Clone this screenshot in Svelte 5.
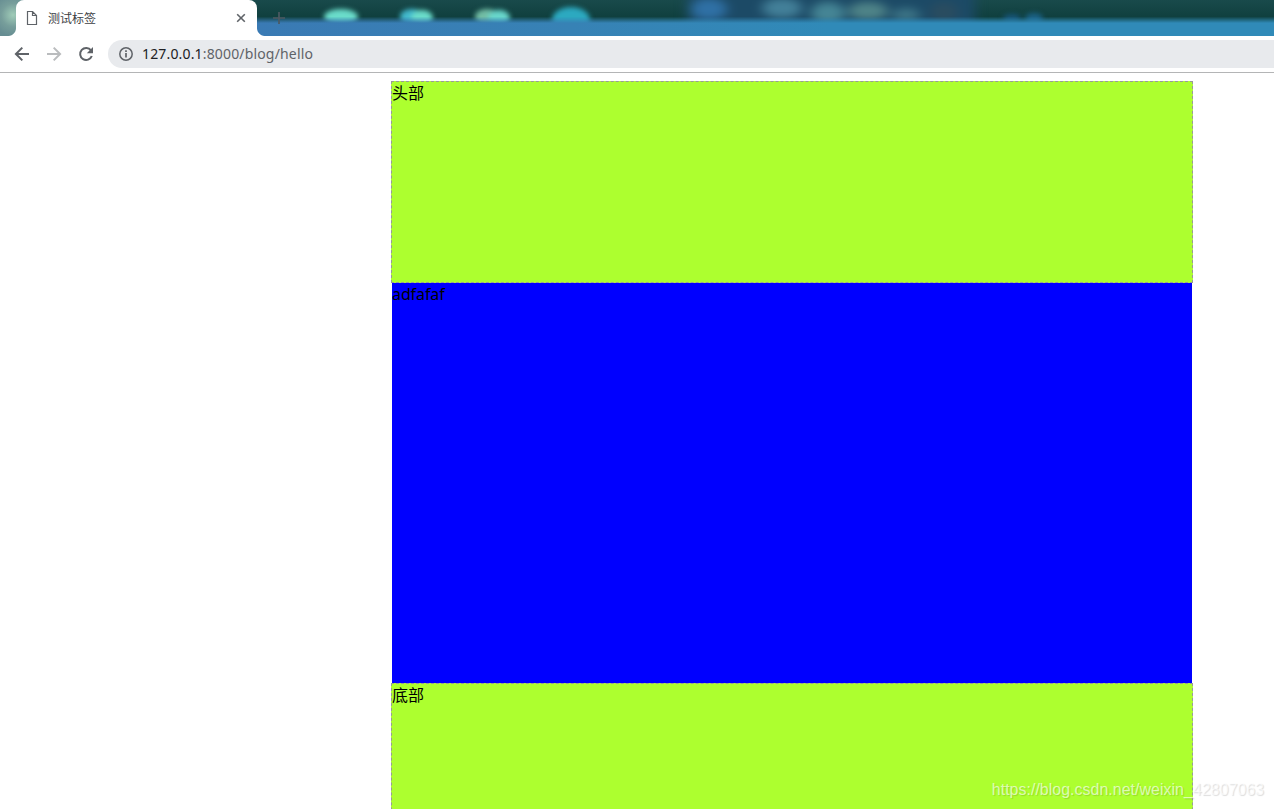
<script lang="ts">
	const host = '127.0.0.1';
	const path = ':8000/blog/hello';

	const sections = [
		{ id: 'header', text: '头部' },
		{ id: 'content', text: 'adfafaf' },
		{ id: 'footer', text: '底部' },
	];

	// blurred desktop shapes that shine through the window frame
	const icons = [
		{ cx: 341, cy: 17, rx: 17, ry: 8, fill: '#6adcca' },
		{ cx: 412, cy: 17, rx: 12, ry: 8, fill: '#42b8cc' },
		{ cx: 422, cy: 18, rx: 11, ry: 8, fill: '#6adcca' },
		{ cx: 487, cy: 17, rx: 12, ry: 8, fill: '#72bda5' },
		{ cx: 499, cy: 18, rx: 11, ry: 8, fill: '#68d6cb' },
		{ cx: 571, cy: 20, rx: 19, ry: 13, fill: '#2ca9c0' },
		{ cx: 1012, cy: 18, rx: 9, ry: 4, fill: '#175578' },
		{ cx: 1034, cy: 18, rx: 9, ry: 5, fill: '#1b6185' },
	];

	const clouds = [
		{ cx: 709, cy: 9, rx: 18, ry: 11, fill: '#2f70a5' },
		{ cx: 782, cy: 8, rx: 20, ry: 10, fill: '#438099' },
		{ cx: 828, cy: 13, rx: 17, ry: 11, fill: '#458595' },
		{ cx: 868, cy: 11, rx: 20, ry: 9, fill: '#4f8488' },
		{ cx: 906, cy: 15, rx: 14, ry: 7, fill: '#3c7486' },
		{ cx: 944, cy: 12, rx: 14, ry: 10, fill: '#2a4c60' },
	];
</script>

<div class="window">
	<div class="tab-strip">
		<svg class="backdrop" width="1274" height="36" viewBox="0 0 1274 36">
			<defs>
				<linearGradient id="dark" x2="0" y2="1">
					<stop offset="0" stop-color="#194a4b" />
					<stop offset="0.45" stop-color="#10403f" />
					<stop offset="1" stop-color="#10403f" />
				</linearGradient>
				<linearGradient id="blue" x2="1" y2="0">
					<stop offset="0.2" stop-color="#3a7ab4" />
					<stop offset="0.45" stop-color="#3782b5" />
					<stop offset="0.65" stop-color="#308ab8" />
					<stop offset="1" stop-color="#308ab8" />
				</linearGradient>
				<linearGradient id="edge" x2="0" y2="1">
					<stop offset="0.46" stop-color="#fff" stop-opacity="0" />
					<stop offset="0.64" stop-color="#fff" />
				</linearGradient>
				<radialGradient id="corner" gradientUnits="userSpaceOnUse" cx="13" cy="15" r="21">
					<stop offset="0" stop-color="#a0ccb8" />
					<stop offset="0.55" stop-color="#779e9b" />
					<stop offset="1" stop-color="#668d92" />
				</radialGradient>
				<mask id="fade">
					<rect width="1274" height="36" fill="url(#edge)" />
				</mask>
				<filter id="soft" filterUnits="userSpaceOnUse" x="0" y="-20" width="1274" height="76" color-interpolation-filters="sRGB">
					<feGaussianBlur stdDeviation="2.6" />
				</filter>
				<filter id="haze" filterUnits="userSpaceOnUse" x="600" y="-20" width="500" height="76" color-interpolation-filters="sRGB">
					<feGaussianBlur stdDeviation="6 4" />
				</filter>
			</defs>
			<rect width="1274" height="36" fill="url(#dark)" />
			<g filter="url(#haze)">
				<rect x="687" y="-10" width="288" height="50" fill="#1c4a66" />
				{#each clouds as cloud}
					<ellipse {...cloud} />
				{/each}
			</g>
			<g filter="url(#soft)">
				{#each icons as icon}
					<ellipse {...icon} />
				{/each}
			</g>
			<rect width="1274" height="36" fill="url(#blue)" mask="url(#fade)" />
			<rect width="30" height="36" fill="url(#corner)" />
		</svg>

		<div class="tab">
			<svg class="page-icon" width="12" height="14" viewBox="0 0 12 14">
				<path d="M1.5.5h5l4 4v9h-9zM6.5.5v4h4" fill="none" stroke="#5f6368" stroke-width="1.2" />
			</svg>
			<span class="tab-title">测试标签</span>
			<svg class="close" width="10" height="10" viewBox="0 0 10 10">
				<path d="M1.2 1.2l7.6 7.6M8.8 1.2L1.2 8.8" stroke="#5f6368" stroke-width="1.6" />
			</svg>
		</div>
		<svg class="new-tab" width="12" height="12" viewBox="0 0 12 12">
			<path d="M6 0v12M0 6h12" stroke="#4d5962" stroke-width="1.7" />
		</svg>
	</div>

	<div class="toolbar">
		<svg class="nav" width="16" height="16" viewBox="0 0 16 16">
			<path d="M15 8H2.4M8.3 1.6L1.9 8l6.4 6.4" fill="none" stroke="#5f6368" stroke-width="2" />
		</svg>
		<svg class="nav" width="16" height="16" viewBox="0 0 16 16">
			<path d="M1 8h12.6M7.7 1.6L14.1 8l-6.4 6.4" fill="none" stroke="#babcbe" stroke-width="2" />
		</svg>
		<svg class="nav" width="16" height="16" viewBox="0 0 16 16">
			<path d="M13 4.4A6 6 0 1 0 13.8 10" fill="none" stroke="#5f6368" stroke-width="2" />
			<path d="M15 1v6.2H8.8z" fill="#5f6368" />
		</svg>
		<div class="address">
			<svg width="14" height="14" viewBox="0 0 14 14">
				<circle cx="7" cy="7" r="6.2" fill="none" stroke="#5f6368" stroke-width="1.5" />
				<path d="M7 6v4.6M7 3.3v1.6" stroke="#5f6368" stroke-width="1.7" />
			</svg>
			<span class="url"><span class="host">{host}</span>{path}</span>
		</div>
	</div>

	<div class="page">
		{#each sections as section}
			<div class={section.id}>{section.text}</div>
		{/each}
	</div>

	<span class="watermark">https://blog.csdn.net/weixin_42807063</span>
</div>

<style>
	:global(body) {
		margin: 0;
		background: #fff;
	}

	.window {
		position: relative;
		width: 1274px;
		height: 809px;
		overflow: hidden;
		background: #fff;
	}

	.tab-strip {
		position: relative;
		display: flex;
		align-items: center;
		height: 36px;
		padding-left: 16px;
	}

	.backdrop {
		position: absolute;
		top: 0;
		left: 0;
	}

	.tab {
		position: relative;
		display: flex;
		align-items: center;
		box-sizing: border-box;
		width: 241px;
		height: 36px;
		padding: 0 11px 0 10px;
		border-radius: 8px 8px 0 0;
		background: #fff;
	}

	.tab::before,
	.tab::after {
		content: '';
		position: absolute;
		bottom: 0;
		width: 8px;
		height: 8px;
	}

	.tab::before {
		left: -8px;
		background: radial-gradient(circle at 0 0, transparent 7.5px, #fff 8.5px);
	}

	.tab::after {
		right: -8px;
		background: radial-gradient(circle at 100% 0, transparent 7.5px, #fff 8.5px);
	}

	.tab-title {
		flex: 1;
		margin-left: 10px;
		font: 12px/18px 'Noto Sans CJK SC', sans-serif;
		color: #3c4043;
	}

	.new-tab {
		position: relative;
		margin-left: 16px;
	}

	.toolbar {
		display: flex;
		align-items: center;
		height: 36px;
		padding-left: 14px;
		border-bottom: 1px solid #b4b5b6;
	}

	.nav {
		margin-right: 16px;
	}

	.address {
		display: flex;
		flex: 1;
		align-items: center;
		height: 28px;
		margin-left: -2px;
		padding-left: 11px;
		border-radius: 14px 0 0 14px;
		background: #e8eaed;
	}

	.url {
		margin-left: 9px;
		font: 14px/20px 'Noto Sans', sans-serif;
		letter-spacing: 0.16px;
		color: #5f6368;
		white-space: nowrap;
	}

	.host {
		color: #202124;
	}

	.page {
		width: 802px;
		margin: 8px 0 0 391px;
		font: 16px/23px 'Noto Sans', 'Noto Sans CJK SC', sans-serif;
		color: #000;
	}

	.header,
	.footer {
		width: 800px;
		height: 200px;
		border: 1px dashed #999;
		background: greenyellow;
	}

	.content {
		width: 800px;
		height: 400px;
		margin: 0 1px;
		letter-spacing: -0.1px;
		background: blue;
	}

	.watermark {
		position: absolute;
		right: 10px;
		bottom: 9px;
		font: 16px/20px 'Liberation Sans', sans-serif;
		color: rgba(255, 255, 255, 0.65);
		text-shadow: 1px 1px 1px rgba(0, 0, 0, 0.14);
	}
</style>
